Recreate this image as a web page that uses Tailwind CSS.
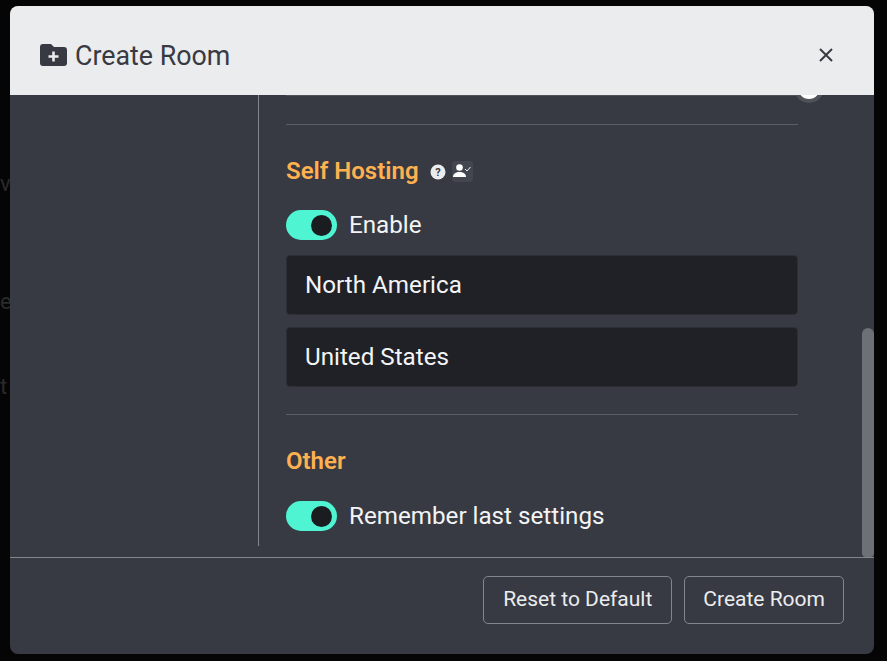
<!DOCTYPE html>
<html lang="en">
<head>
    <meta charset="UTF-8">
    <title>Create Room</title>
    <script src="https://cdn.jsdelivr.net/npm/@tailwindcss/browser@4"></script>
</head>
<body class="bg-[#050505] h-[661px] overflow-hidden font-['Roboto',sans-serif] relative">
    <!-- dimmed page behind the modal -->
    <div class="absolute left-0 top-[167px] text-[22px] text-[#2a2a2c]">vo</div>
    <div class="absolute left-0 top-[285px] text-[22px] text-[#2a2a2c]">el</div>
    <div class="absolute left-0 top-[370px] text-[22px] text-[#2a2a2c]">t</div>

    <div class="relative ml-[10px] mt-[6px] w-[864px] h-[648px] rounded-[8px] bg-[#383a43] flex flex-col overflow-hidden">
        <div class="h-[89px] shrink-0 bg-[#ebecee] flex items-center justify-between pl-[30px] pr-[41px] pt-[9px] relative z-10">
            <div class="flex items-center gap-[8px] text-[#383a43]">
                <svg width="27" height="24" viewBox="0 0 27 24">
                    <path fill="#383a43" d="M3 1h8l3 3h10a3 3 0 0 1 3 3v13a3 3 0 0 1-3 3H3a3 3 0 0 1-3-3V4a3 3 0 0 1 3-3z"/>
                    <path fill="none" stroke="#ebecee" stroke-width="2.6" d="M13.5 8.5v10M8.500 13.500h10"/>
                </svg>
                <span class="text-[26.800px] leading-none mt-[2px]">Create Room</span>
            </div>
            <svg width="14" height="14" viewBox="0 0 14 14">
                <path fill="none" stroke="#383a43" stroke-width="2" d="M1 1l12 12M13 1L1 13"/>
            </svg>
        </div>

        <div class="flex-1 min-h-0 flex relative">
            <div class="w-[249px] shrink-0 h-[451px] border-r border-[#84868c]"></div>
            <div class="w-[512px] ml-[27px] relative">
                <div class="h-[30px] border-b border-[#5c5e66]"></div>
                <div class="absolute left-0 right-0 top-[-1px] h-[2px] bg-[#50525a]"></div>
                <h3 class="mt-[30px] text-[24px] leading-[32px] font-semibold text-[#ffb150] flex items-center">
                    Self Hosting
                    <svg width="16" height="16" viewBox="0 0 16 16" class="ml-[11px] mt-[2px]">
                        <circle cx="8" cy="8" r="7.5" fill="#ebecee"/>
                        <text x="8" y="12" text-anchor="middle" font-size="11" font-weight="700" fill="#383a43" font-family="Roboto">?</text>
                    </svg>
                    <span class="ml-[6px] w-[21px] h-[21px] rounded-[3px] bg-[#44464f] flex items-center justify-center">
                        <svg width="18" height="14" viewBox="0 0 18 14">
                            <circle cx="6.500" cy="3.500" r="3.300" fill="#fff"/>
                            <path fill="#fff" d="M0 13c0-3.500 3-5 6.500-5s6.500 1.500 6.500 5z"/>
                            <path fill="none" stroke="#ebecee" stroke-width="1" d="M12 5l2 2 3.500-4"/>
                        </svg>
                    </span>
                </h3>
                <label class="mt-[23px] flex items-center gap-[12px] h-[30px] text-[24.200px] text-[#f3f4f6]">
                    <span class="w-[51px] h-[30px] rounded-full bg-[#4ff5d2] flex items-center justify-end pr-[5px]">
                        <span class="w-[21px] h-[21px] rounded-full bg-[#1b1c20]"></span>
                    </span>
                    Enable
                </label>
                <div class="mt-[15px] h-[60px] rounded-[4px] bg-[#202126] border border-[#2e2f36] flex items-center pl-[18px] text-[24.200px] text-[#f3f4f6]">North America</div>
                <div class="mt-[12px] h-[60px] rounded-[4px] bg-[#202126] border border-[#2e2f36] flex items-center pl-[18px] text-[24.200px] text-[#f3f4f6]">United States</div>
                <div class="mt-[27px] border-t border-[#5c5e66]"></div>
                <h3 class="mt-[30px] text-[24px] leading-[32px] font-semibold text-[#ffb150]">Other</h3>
                <label class="mt-[24px] flex items-center gap-[12px] h-[30px] text-[24.200px] text-[#f3f4f6]">
                    <span class="w-[51px] h-[30px] rounded-full bg-[#4ff5d2] flex items-center justify-end pr-[5px]">
                        <span class="w-[21px] h-[21px] rounded-full bg-[#1b1c20]"></span>
                    </span>
                    Remember last settings
                </label>
            </div>
            <!-- toggle knob peeking from under the header, and the scrollbar -->
            <div class="absolute left-[784px] top-[-22px] w-[30px] h-[30px] rounded-full bg-white border-[4px] border-[#50525a]"></div>
            <div class="absolute right-0 top-[233px] w-[12px] h-[229px] rounded-t-[6px] rounded-b-[4px] bg-[#6d7076]"></div>
        </div>

        <div class="h-[97px] shrink-0 border-t border-[#84868c] flex items-start justify-end gap-[12px] pr-[30px] pt-[18px]">
            <button class="h-[48px] px-[19px] rounded-[5px] border border-[#84868c] text-[21px] text-[#ebecee]">Reset to Default</button>
            <button class="h-[48px] px-[18px] rounded-[5px] border border-[#84868c] text-[21px] text-[#ebecee]">Create Room</button>
        </div>
    </div>
</body>
</html>
